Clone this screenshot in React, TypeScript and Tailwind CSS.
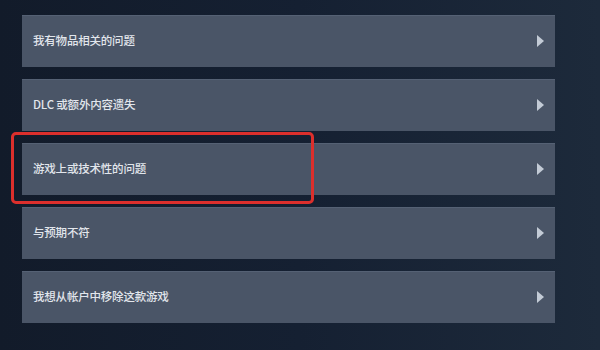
const items = [
  "我有物品相关的问题",
  "DLC 或额外内容遗失",
  "游戏上或技术性的问题",
  "与预期不符",
  "我想从帐户中移除这款游戏",
];

export default function App() {
  return (
    <div className="w-[600px] h-[350px] overflow-hidden bg-gradient-to-r from-[#121b2a] via-[#152032] to-[#1d2a3b] pt-[15px] pl-[22px] flex flex-col gap-[12px] font-['Noto_Sans_CJK_SC','Noto_Sans',sans-serif]">
      {items.map((text, i) => (
        <Row key={text} text={text} highlight={i === 2} />
      ))}
    </div>
  );
}

function Row({ text, highlight }: { text: string; highlight?: boolean }) {
  return (
    <div className="relative w-[533px] h-[52px] shrink-0 bg-[#4a5567] flex items-center justify-between pl-[11px] pr-[11px] shadow-[0_1px_0_#556174_inset]">
      <span className="text-[11.5px] font-medium text-[#e2e6ec] tracking-[-0.2px]">{text}</span>
      <svg width="7" height="12" viewBox="0 0 7 12" className="shrink-0">
        <path d="M0 0 L7 6 L0 12 Z" fill="#c3cbd6" />
      </svg>
      {highlight && (
        <div className="absolute left-[-11px] top-[-11px] w-[303px] h-[72px] border-[3px] border-[#dc2f2c] rounded-[5px] pointer-events-none" />
      )}
    </div>
  );
}
